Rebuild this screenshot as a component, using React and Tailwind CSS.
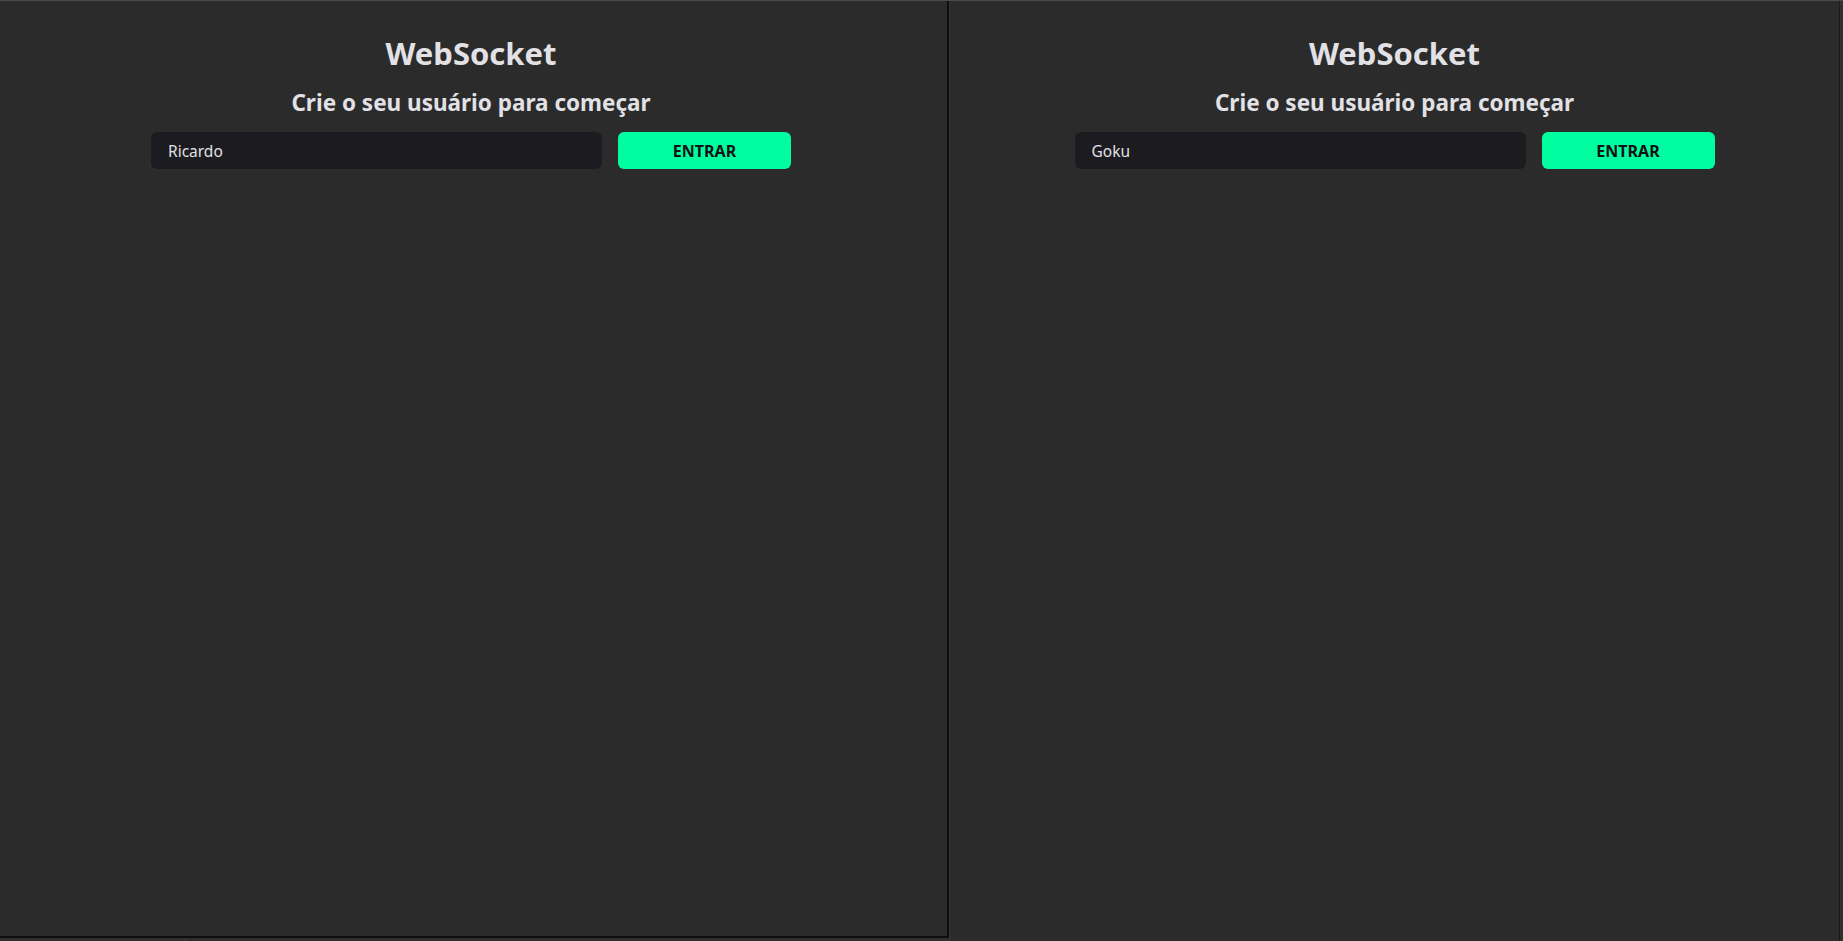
function Pane({ name, className }) {
  return (
    <div className={`flex flex-col items-center bg-[#2b2b2b] pt-[32px] ${className}`}>
      <h1 className="text-[31px] font-bold leading-[40px] text-[#e1e1e6]">WebSocket</h1>
      <h2 className="mt-[15px] text-[22.5px] font-bold leading-[30px] text-[#e1e1e6]">
        Crie o seu usuário para começar
      </h2>
      <form className="mt-[14px] flex gap-4" onSubmit={(e) => e.preventDefault()}>
        <input
          type="text"
          defaultValue={name}
          className="h-[37px] w-[451px] rounded-md bg-[#1c1b1f] px-[17px] text-[15.5px] text-[#e1e1e6] outline-none"
        />
        <button
          type="submit"
          className="h-[37px] w-[173px] rounded-md bg-[#00fda0] text-[16px] font-bold text-[#121214]"
        >
          ENTRAR
        </button>
      </form>
    </div>
  )
}

export default function App() {
  return (
    <div
      className="flex h-[941px] w-full flex-col overflow-hidden bg-[#2b2b2b]"
      style={{ fontFamily: '"Noto Sans", "Open Sans", sans-serif' }}
    >
      <div className="h-px bg-[#4a4a4a]" />
      <div className="flex flex-1">
        <div className="flex w-[949px] flex-col">
          <Pane name="Ricardo" className="flex-1 border-r-2 border-b-2 border-[#0e0e0e] pr-[5px]" />
          <div className="flex h-[3px] bg-[#2e2e2e]">
            <div className="w-[186px] border-r border-[#3a3a3a]" />
          </div>
        </div>
        <div className="w-px bg-[#353535]" />
        <Pane name="Goku" className="flex-1" />
        <div className="w-[4px] border-l border-[#1a1a1a] bg-[#303030]" />
      </div>
    </div>
  )
}
